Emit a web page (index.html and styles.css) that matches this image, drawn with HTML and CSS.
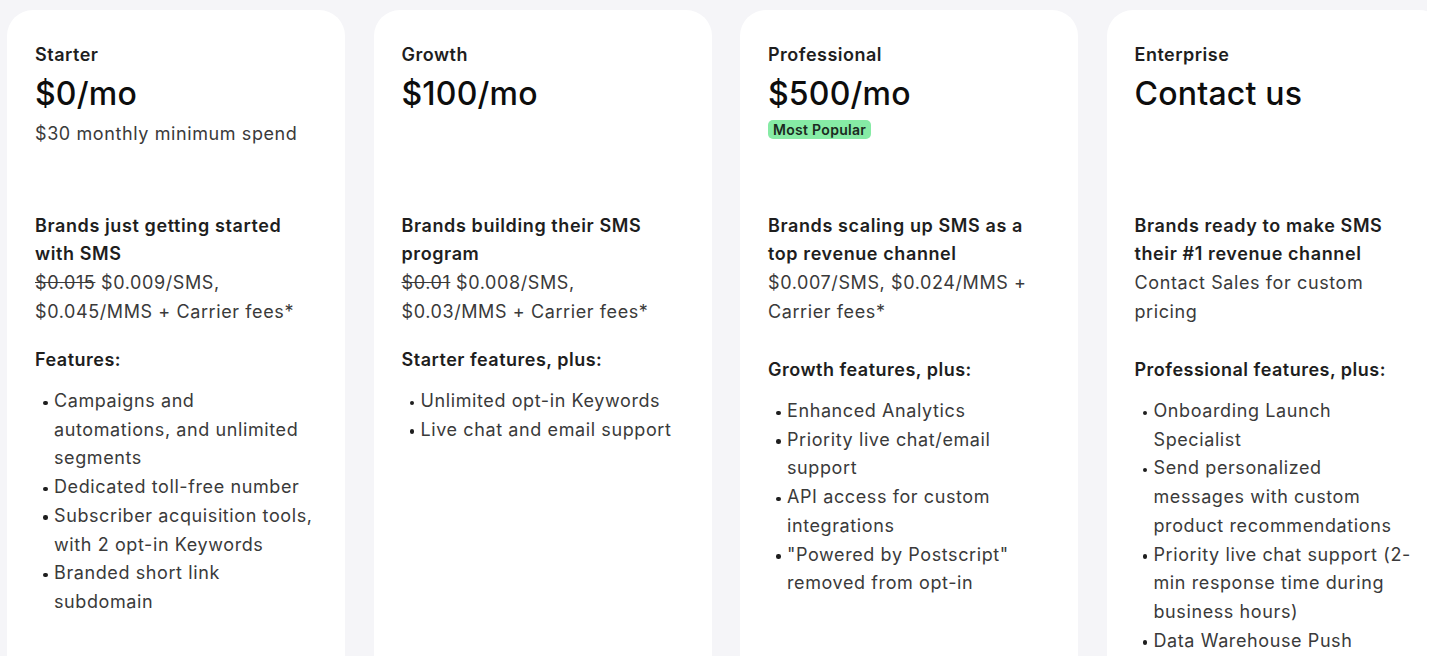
FILE: index.html
```html
<!DOCTYPE html>
<html lang="en">
<head>
<meta charset="utf-8">
<title>Pricing</title>
<link rel="stylesheet" href="styles.css">
</head>
<body>
<div class="frame">
  <div class="plans">
    <section class="card">
      <header class="head">
        <div class="tier">Starter</div>
        <div class="price">$0/mo</div>
        <div class="sub">$30 monthly minimum spend</div>
      </header>
      <div class="desc">
        <p class="who">Brands just getting started with SMS</p>
        <p class="rate"><s>$0.015</s> $0.009/SMS, $0.045/MMS + Carrier fees*</p>
      </div>
      <h3 class="feat-title">Features:</h3>
      <ul class="feats">
        <li>Campaigns and automations, and unlimited segments</li>
        <li>Dedicated toll-free number</li>
        <li>Subscriber acquisition tools, with 2 opt-in Keywords</li>
        <li>Branded short link subdomain</li>
      </ul>
    </section>
    <section class="card">
      <header class="head">
        <div class="tier">Growth</div>
        <div class="price">$100/mo</div>
      </header>
      <div class="desc">
        <p class="who">Brands building their SMS program</p>
        <p class="rate"><s>$0.01</s> $0.008/SMS, $0.03/MMS + Carrier fees*</p>
      </div>
      <h3 class="feat-title">Starter features, plus:</h3>
      <ul class="feats">
        <li>Unlimited opt-in Keywords</li>
        <li>Live chat and email support</li>
      </ul>
    </section>
    <section class="card">
      <header class="head">
        <div class="tier">Professional</div>
        <div class="price">$500/mo</div>
        <span class="badge">Most Popular</span>
      </header>
      <div class="desc">
        <p class="who">Brands scaling up SMS as a top revenue channel</p>
        <p class="rate">$0.007/SMS, $0.024/MMS + Carrier fees*</p>
      </div>
      <h3 class="feat-title feat-title--wide">Growth features, plus:</h3>
      <ul class="feats">
        <li>Enhanced Analytics</li>
        <li>Priority live chat/email support</li>
        <li>API access for custom integrations</li>
        <li>"Powered by Postscript" removed from opt-in</li>
      </ul>
    </section>
    <section class="card">
      <header class="head">
        <div class="tier">Enterprise</div>
        <div class="price">Contact us</div>
      </header>
      <div class="desc">
        <p class="who">Brands ready to make SMS their #1 revenue channel</p>
        <p class="rate">Contact Sales for custom pricing</p>
      </div>
      <h3 class="feat-title feat-title--wide">Professional features, plus:</h3>
      <ul class="feats">
        <li>Onboarding Launch Specialist</li>
        <li>Send personalized messages with custom product recommendations</li>
        <li>Priority live chat support (2-min response time during business hours)</li>
        <li>Data Warehouse Push</li>
      </ul>
    </section>
  </div>
</div>
</body>
</html>
```
FILE: styles.css
```css
* { box-sizing: border-box; }
html, body {
  margin: 0;
  padding: 0;
  background: #ffffff;
}
body {
  font-family: Inter, "Noto Sans", "Liberation Sans", sans-serif;
  color: #333333;
  width: 1440px;
  height: 664px;
  overflow: hidden;
}
.frame {
  width: 1427px;
  height: 656px;
  background: #f5f5f8;
  overflow: hidden;
  padding: 10px 0 0 7px;
}
.plans {
  display: flex;
  gap: 28.5px;
  width: 1500px;
}
.card {
  flex: 0 0 338px;
  height: 700px;
  background: #ffffff;
  border-radius: 26px;
  padding: 32px 32px 30px 28px;
}
.head {
  min-height: 169.5px;
  display: flex;
  flex-direction: column;
  align-items: flex-start;
}
.tier {
  font-size: 18px;
  line-height: 25px;
  font-weight: 600;
  letter-spacing: 0.5px;
  color: #1e1e1e;
}
.price {
  margin-top: 7px;
  font-size: 32px;
  line-height: 40px;
  font-weight: 500;
  color: #0d0d0d;
  letter-spacing: 0.2px;
}
.sub {
  margin-top: 6px;
  font-size: 18px;
  line-height: 27px;
  letter-spacing: 0.6px;
  color: #3a3a3a;
}
.badge {
  margin-top: 6px;
  background: #86eba5;
  color: #1b2a1f;
  font-size: 14px;
  font-weight: 600;
  letter-spacing: 0.3px;
  line-height: 19px;
  padding: 0 5px;
  border-radius: 5px;
}
.desc p {
  margin: 0;
  font-size: 18px;
  line-height: 28.7px;
  letter-spacing: 0.6px;
}
.who {
  font-weight: 600;
  color: #1e1e1e;
}
.rate {
  color: #3a3a3a;
}
.feat-title {
  margin: 20px 0 12px;
  font-size: 18px;
  line-height: 28.7px;
  letter-spacing: 0.5px;
  font-weight: 600;
  color: #1e1e1e;
}
.feat-title--wide {
  margin-top: 30px;
}
.feats {
  margin: 0;
  padding: 0 0 0 19px;
  list-style: none;
}
.feats li {
  position: relative;
  font-size: 18px;
  line-height: 28.7px;
  letter-spacing: 0.6px;
  color: #3a3a3a;
}
.feats li::before {
  content: "";
  position: absolute;
  left: -11px;
  top: 13.5px;
  width: 4.5px;
  height: 4.5px;
  border-radius: 50%;
  background: #1e1e1e;
}
```
